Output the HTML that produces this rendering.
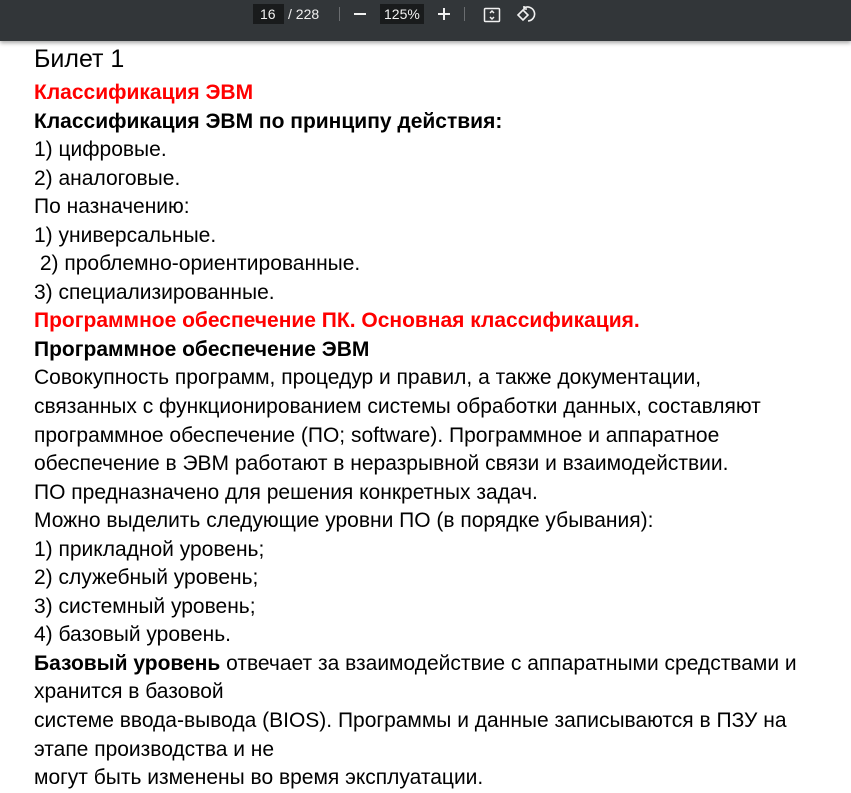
<!DOCTYPE html>
<html><head><meta charset="utf-8"><style>
*{margin:0;padding:0}
body{width:851px;height:784px;overflow:hidden;background:#fff;font-family:"Liberation Sans",sans-serif;position:relative}
.tb{position:absolute;left:0;top:0;width:851px;height:41px;background:#323639;box-shadow:0 2px 4px rgba(0,0,0,.35);color:#f1f1f1;font-size:14px;z-index:2}
.tb span{position:absolute;top:13px}
.box{position:absolute;top:4px;height:20px;background:#191b1c}
.sep{position:absolute;top:7px;width:1px;height:14px;background:#6a6d70}
.c{position:absolute;left:34px;top:44px;width:817px;font-size:21px;line-height:28.55px;color:#000;white-space:nowrap}
.r{color:#f00;font-weight:bold}
.b{font-weight:bold}
h1{font-weight:normal;font-size:25px;line-height:30px;margin-bottom:5px}
</style></head><body>
<div class="tb">
<div class="box" style="left:253px;width:31px"></div>
<span style="left:260px;top:6px">16</span>
<span style="left:288px;top:6px">/ 228</span>
<div class="sep" style="left:339px"></div>
<div style="position:absolute;left:354px;top:13px;width:12px;height:2px;background:#f1f1f1"></div>
<div class="box" style="left:380px;width:44px"></div>
<span style="left:384px;top:6px">125%</span>
<div style="position:absolute;left:438px;top:13px;width:12px;height:2px;background:#f1f1f1"></div>
<div style="position:absolute;left:443px;top:8px;width:2px;height:12px;background:#f1f1f1"></div>
<div class="sep" style="left:464px"></div>
<svg style="position:absolute;left:482px;top:5px" width="20" height="20" viewBox="0 0 20 20" fill="none" stroke="#f1f1f1" stroke-width="1.5"><rect x="2.5" y="3.5" width="15" height="13" rx="1"/><path d="M8 8l2-2 2 2M8 12l2 2 2-2" /></svg>
<svg style="position:absolute;left:514px;top:4px" width="22" height="22" viewBox="0 0 22 22" fill="none" stroke="#f1f1f1" stroke-width="1.6"><path d="M4 11l5-5 5 5-5 5z"/><path d="M10 4a7 7 0 1 1 4 13"/><path d="M10 2v3h3"/></svg>
</div>
<div class="c">
<h1>Билет 1</h1>
<div class="r">Классификация ЭВМ</div>
<div class="b">Классификация ЭВМ по принципу действия:</div>
<div>1) цифровые.</div>
<div>2) аналоговые.</div>
<div>По назначению:</div>
<div>1) универсальные.</div>
<div>&nbsp;2) проблемно-ориентированные.</div>
<div>3) специализированные.</div>
<div class="r">Программное обеспечение ПК. Основная классификация.</div>
<div class="b">Программное обеспечение ЭВМ</div>
<div>Совокупность программ, процедур и правил, а также документации,</div>
<div>связанных с функционированием системы обработки данных, составляют</div>
<div>программное обеспечение (ПО; software). Программное и аппаратное</div>
<div>обеспечение в ЭВМ работают в неразрывной связи и взаимодействии.</div>
<div>ПО предназначено для решения конкретных задач.</div>
<div>Можно выделить следующие уровни ПО (в порядке убывания):</div>
<div>1) прикладной уровень;</div>
<div>2) служебный уровень;</div>
<div>3) системный уровень;</div>
<div>4) базовый уровень.</div>
<div><b>Базовый уровень</b> отвечает за взаимодействие с аппаратными средствами и</div>
<div>хранится в базовой</div>
<div>системе ввода-вывода (BIOS). Программы и данные записываются в ПЗУ на</div>
<div>этапе производства и не</div>
<div>могут быть изменены во время эксплуатации.</div>
</div>
</body></html>
